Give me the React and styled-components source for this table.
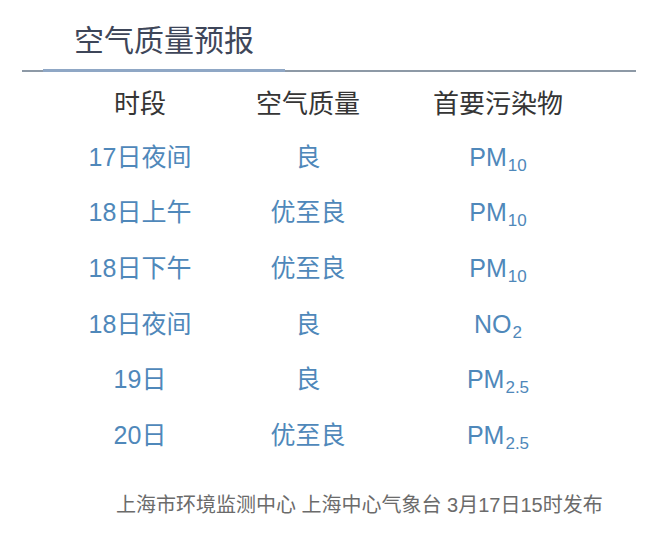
import React from 'react'
import styled, { createGlobalStyle } from 'styled-components'

const GlobalStyle = createGlobalStyle`
  html, body {
    margin: 0;
    padding: 0;
    background: #fff;
  }
  body {
    font-family: "Liberation Sans", "Noto Sans CJK SC", sans-serif;
    -webkit-font-smoothing: antialiased;
  }
`

const rows = [
  { period: '17日夜间', quality: '良', name: 'PM', sub: '10' },
  { period: '18日上午', quality: '优至良', name: 'PM', sub: '10' },
  { period: '18日下午', quality: '优至良', name: 'PM', sub: '10' },
  { period: '18日夜间', quality: '良', name: 'NO', sub: '2' },
  { period: '19日', quality: '良', name: 'PM', sub: '2.5' },
  { period: '20日', quality: '优至良', name: 'PM', sub: '2.5' },
]

export default function App() {
  return (
    <Page>
      <GlobalStyle />

      <Title>空气质量预报</Title>

      <Rule>
        <RuleAccent />
      </Rule>

      <Table>
        <HeadCell>时段</HeadCell>
        <HeadCell>空气质量</HeadCell>
        <HeadCell>首要污染物</HeadCell>

        {rows.map((r) => (
          <React.Fragment key={r.period}>
            <Cell>{r.period}</Cell>
            <Cell>{r.quality}</Cell>
            <Cell>
              {r.name}
              <Sub>{r.sub}</Sub>
            </Cell>
          </React.Fragment>
        ))}
      </Table>

      <Footer>上海市环境监测中心 上海中心气象台 3月17日15时发布</Footer>
    </Page>
  )
}

const Page = styled.div`
  width: 660px;
  height: 544px;
  overflow: hidden;
  padding-top: 26px;
  box-sizing: border-box;
`

const Title = styled.h1`
  margin: 0;
  padding-left: 74px;
  font-size: 30px;
  line-height: 30px;
  font-weight: 400;
  color: #3e4659;
  letter-spacing: 0;
`

const Rule = styled.div`
  margin: 14px 24px 0 22px;
  height: 2px;
  background: #8d99a6;
  display: flex;
`

const RuleAccent = styled.div`
  margin-left: 21px;
  margin-top: -1px;
  width: 242px;
  height: 3px;
  background: #8fa7c5;
`

const Table = styled.div`
  margin-top: 7px;
  padding-left: 56px;
  display: grid;
  grid-template-columns: 168px 168px 212px;
  grid-template-rows: 50px repeat(6, 55.6px);
  align-items: center;
  justify-items: center;
`

const HeadCell = styled.div`
  font-size: 26px;
  line-height: 30px;
  color: #353535;
`

const Cell = styled.div`
  font-size: 25px;
  line-height: 30px;
  color: #4f88ba;
  white-space: nowrap;
`

const Sub = styled.span`
  font-size: 17px;
  line-height: 0;
  vertical-align: -5px;
  margin-left: 1px;
`

const Footer = styled.div`
  margin-top: 32px;
  padding-left: 116px;
  font-size: 20px;
  line-height: 20px;
  color: #6b6b6b;
  white-space: nowrap;
`
